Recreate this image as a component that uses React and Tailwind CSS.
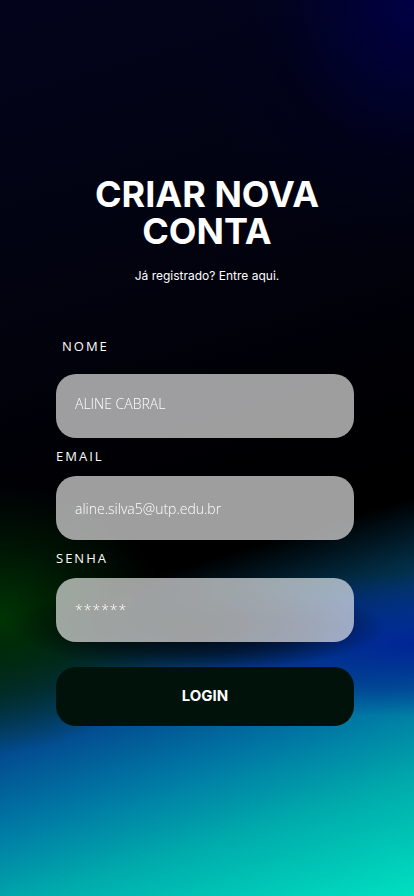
export default function App() {
  return (
    <div className="relative w-full h-[896px] overflow-hidden bg-black font-['Inter','Lato',sans-serif]">
      <div className="absolute inset-0 bg-[linear-gradient(163deg,#03041c_0%,#01020c_35%,#000003_52%,#000_61%,#022a40_67%,#034c90_74%,#0078a4_81%,#00acac_89%,#00e0c0_100%)]" />
      <div className="absolute inset-0 bg-[radial-gradient(ellipse_55%_30%_at_100%_0%,rgba(0,0,75,0.9),rgba(0,0,40,0.3)_60%,transparent_100%)]" />
      <div className="absolute inset-0 bg-[radial-gradient(ellipse_40%_15%_at_0%_69%,rgba(0,55,5,0.95),rgba(0,40,5,0.5)_55%,transparent_100%)]" />
      <div className="absolute inset-0 bg-[radial-gradient(ellipse_60%_8%_at_100%_72%,rgba(0,35,150,0.95),rgba(0,35,140,0.5)_60%,transparent_100%)]" />
      <div className="absolute inset-0 bg-[radial-gradient(ellipse_45%_5%_at_48%_70%,rgba(0,0,0,0.95),rgba(0,0,0,0.5)_60%,transparent_100%)]" />
      <div className="relative flex flex-col pt-[176px]">
        <h1 className="self-center text-white text-[36px] leading-[37px] font-bold text-center font-['Inter',sans-serif]">
          CRIAR NOVA
          <br />
          CONTA
        </h1>
        <p className="self-center mt-[18px] text-white text-[12px] leading-[16px] font-['Inter',sans-serif]">Já registrado? Entre aqui.</p>
        <div className="w-[298px] ml-[56px] mt-[54px] flex flex-col">
          <label className="ml-[6px] text-white text-[13px] leading-[16px] tracking-[2px] font-['Open_Sans',sans-serif]">NOME</label>
          <div className="mt-[20px] h-[64px] rounded-[20px] bg-[rgba(255,255,255,0.62)] backdrop-blur-sm flex items-center px-[19px] text-white text-[14px] font-['Open_Sans',sans-serif] font-light">
            <span className="-mt-[6px]">ALINE CABRAL</span>
          </div>
          <label className="mt-[10px] text-white text-[13px] leading-[16px] tracking-[2px] font-['Open_Sans',sans-serif]">EMAIL</label>
          <div className="mt-[12px] h-[64px] rounded-[20px] bg-[rgba(255,255,255,0.62)] backdrop-blur-sm flex items-center px-[19px] text-white text-[14px] font-['Open_Sans',sans-serif] font-light">
            <span>aline.silva5@utp.edu.br</span>
          </div>
          <label className="mt-[10px] text-white text-[13px] leading-[16px] tracking-[2px] font-['Open_Sans',sans-serif]">SENHA</label>
          <div className="mt-[12px] h-[64px] rounded-[20px] bg-[rgba(255,255,255,0.62)] backdrop-blur-sm flex items-center px-[19px] text-white text-[14px] font-['Open_Sans',sans-serif] font-light">
            <span className="-mt-[2px] tracking-[1px]">******</span>
          </div>
          <button className="mt-[25px] h-[59px] rounded-[20px] bg-[#001209] text-white text-[15px] font-bold font-['Inter',sans-serif]">
            LOGIN
          </button>
        </div>
      </div>
    </div>
  );
}
